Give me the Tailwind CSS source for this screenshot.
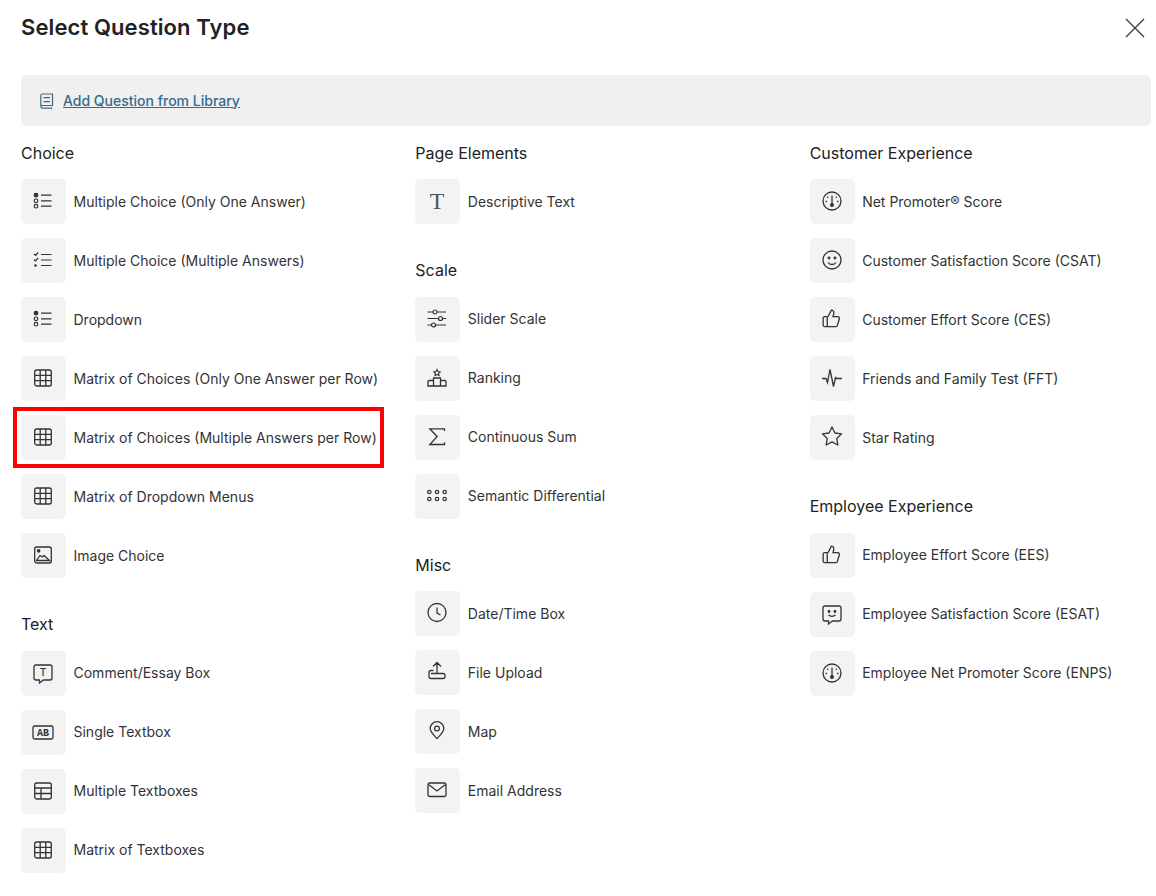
<!DOCTYPE html>
<html lang="en">
<head>
  <meta charset="UTF-8" />
  <title>Select Question Type</title>
  <script src="https://cdn.jsdelivr.net/npm/@tailwindcss/browser@4"></script>
</head>
<body class="bg-white font-['Inter',sans-serif] text-[#333]">

  <!-- Icon sprite -->
  <svg class="hidden">
    <defs>
      <symbol id="i-radio" viewBox="0 0 24 24"><circle cx="5" cy="6.2" r="1.8" fill="#333"/><circle cx="5" cy="11.8" r="1.8"/><circle cx="5" cy="17.2" r="1.8"/><path d="M10 6.2h10.5M10 11.8h10.5M10 17.2h10.5"/></symbol>
      <symbol id="i-check" viewBox="0 0 24 24"><path d="M3 6l1.5 1.5L7.2 4.5M3 11.5L4.500 13l2.700-3M10 6.500h10.500M10 12h10.500M10 17.500h10.500"/><circle cx="4.500" cy="17.500" r=".7" fill="#333"/></symbol>
      <symbol id="i-grid" viewBox="0 0 24 24"><rect x="3.7" y="4" width="16.6" height="16" rx="2"/><path d="M9.2 4v16M14.8 4v16M3.7 9.3h16.6M3.7 14.7h16.6"/></symbol>
      <symbol id="i-rows" viewBox="0 0 24 24"><rect x="3.7" y="4" width="16.6" height="16" rx="2"/><path d="M10 9v11M3.7 9h16.6M3.7 14.5h16.6"/></symbol>
      <symbol id="i-image" viewBox="0 0 24 24"><rect x="3.7" y="4" width="16.6" height="16" rx="2"/><circle cx="7.6" cy="7.8" r="1.2" fill="#333"/><path d="M5.500 17.500l3.500-5 2.500 1.500 1.500-1.500 5.500 5z"/></symbol>
      <symbol id="i-thumb" viewBox="0 0 24 24"><g transform="translate(1.5 1.5) scale(.82)"><path d="M7 10v12M15 5.88 14 10h5.83a2 2 0 0 1 1.92 2.56l-2.33 8A2 2 0 0 1 17.5 22H4a2 2 0 0 1-2-2v-8a2 2 0 0 1 2-2h2.76a2 2 0 0 0 1.79-1.11L12 2a3.13 3.13 0 0 1 3 3.88Z"/></g></symbol>
      <symbol id="i-gauge" viewBox="0 0 24 24"><circle cx="12" cy="12" r="9"/><circle cx="12" cy="16" r="1.3" fill="#333"/><path d="M12 15V6.500M7.300 7.800l.9.9M16.700 7.800l-.9.9M5.600 12.500h1.400M17 12.500h1.400"/></symbol>
    </defs>
  </svg>

  <div class="w-[1156px] h-[896px] overflow-hidden pl-[21px] pr-[5px]">

    <!-- Header -->
    <div class="h-[54px] flex items-center justify-between mb-[21px]">
      <h1 class="text-[22px] font-semibold tracking-[0.1px] text-[#222]">Select Question Type</h1>
      <svg class="mr-[5px] mt-[1px]" width="22" height="22" viewBox="0 0 22 22" fill="none" stroke="#444" stroke-width="1.4"><path d="M2 2l18 18M20 2L2 20"/></svg>
    </div>

    <!-- Library banner -->
    <div class="h-[51px] bg-[#f0f0f0] rounded-[5px] flex items-center pl-[18px] mb-[15px]">
      <svg width="16" height="16" viewBox="0 0 16 16" fill="none" stroke="#3a6b8c" stroke-width="1.2" class="mr-[8px]"><path d="M1.800 13V2.500a1.500 1.500 0 0 1 1.500-1.500H13.500v11.500H3.300a1.300 1.300 0 0 0 0 2.600h10.200M4.500 4.700h6.500M4.500 8.700h6.500"/></svg>
      <a href="#" class="text-sm font-medium text-[#336b8e] underline">Add Question from Library</a>
    </div>

    <!-- Columns -->
    <div class="grid grid-cols-[394.33px_394.33px_1fr]">

      <!-- Column 1 -->
      <div>
        <section class="pb-5">
          <h2 class="h-6 leading-6 mb-[14px] text-[#222]">Choice</h2>
          <div class="flex flex-col gap-[14px]">
            <div class="flex items-center gap-[7.5px] text-sm"><span class="w-[45px] h-[45px] rounded-[5px] bg-[#f3f3f3] flex items-center justify-center pr-px pb-px"><svg width="24" height="24" fill="none" stroke="#333" stroke-width="1.2"><use href="#i-radio"/></svg></span>Multiple Choice (Only One Answer)</div>
            <div class="flex items-center gap-[7.5px] text-sm"><span class="w-[45px] h-[45px] rounded-[5px] bg-[#f3f3f3] flex items-center justify-center pr-px pb-px"><svg width="24" height="24" fill="none" stroke="#333" stroke-width="1.2"><use href="#i-check"/></svg></span>Multiple Choice (Multiple Answers)</div>
            <div class="flex items-center gap-[7.5px] text-sm"><span class="w-[45px] h-[45px] rounded-[5px] bg-[#f3f3f3] flex items-center justify-center pr-px pb-px"><svg width="24" height="24" fill="none" stroke="#333" stroke-width="1.2"><use href="#i-radio"/></svg></span>Dropdown</div>
            <div class="flex items-center gap-[7.5px] text-sm"><span class="w-[45px] h-[45px] rounded-[5px] bg-[#f3f3f3] flex items-center justify-center pr-px pb-px"><svg width="24" height="24" fill="none" stroke="#333" stroke-width="1.3"><use href="#i-grid"/></svg></span>Matrix of Choices (Only One Answer per Row)</div>
            <div class="relative flex items-center gap-[7.5px] text-sm"><span class="w-[45px] h-[45px] rounded-[5px] bg-[#f3f3f3] flex items-center justify-center pr-px pb-px"><svg width="24" height="24" fill="none" stroke="#333" stroke-width="1.3"><use href="#i-grid"/></svg></span>Matrix of Choices (Multiple Answers per Row)
              <div class="absolute left-[-8px] top-[-8px] w-[371px] h-[61px] border-[4.5px] border-[#fe0000]"></div>
            </div>
            <div class="flex items-center gap-[7.5px] text-sm"><span class="w-[45px] h-[45px] rounded-[5px] bg-[#f3f3f3] flex items-center justify-center pr-px pb-px"><svg width="24" height="24" fill="none" stroke="#333" stroke-width="1.3"><use href="#i-grid"/></svg></span>Matrix of Dropdown Menus</div>
            <div class="flex items-center gap-[7.5px] text-sm"><span class="w-[45px] h-[45px] rounded-[5px] bg-[#f3f3f3] flex items-center justify-center pr-px pb-px"><svg width="24" height="24" fill="none" stroke="#333" stroke-width="1.3"><use href="#i-image"/></svg></span>Image Choice</div>
          </div>
        </section>
        <section class="mt-[14px]">
          <h2 class="h-6 leading-6 mb-[14.6px] text-[#222]">Text</h2>
          <div class="flex flex-col gap-[14px]">
            <div class="flex items-center gap-[7.5px] text-sm"><span class="w-[45px] h-[45px] rounded-[5px] bg-[#f3f3f3] flex items-center justify-center pr-px pb-px"><svg width="24" height="24" viewBox="0 0 24 24" fill="none" stroke="#333" stroke-width="1.3"><path d="M5 4h14a2 2 0 0 1 2 2v11a2 2 0 0 1-2 2h-6.500l-4 3v-3H5a2 2 0 0 1-2-2V6a2 2 0 0 1 2-2z"/><text x="12" y="15" text-anchor="middle" font-size="10" font-family="Inter" font-weight="500" fill="#333" stroke="none">T</text></svg></span>Comment/Essay Box</div>
            <div class="flex items-center gap-[7.5px] text-sm"><span class="w-[45px] h-[45px] rounded-[5px] bg-[#f3f3f3] flex items-center justify-center pr-px pb-px"><svg width="24" height="24" viewBox="0 0 24 24" fill="none" stroke="#333" stroke-width="1.3"><rect x="2" y="6" width="20" height="13" rx="1.5"/><text x="12" y="16" text-anchor="middle" font-size="10" font-family="Liberation Mono" font-weight="700" fill="#333" stroke="none">AB</text></svg></span>Single Textbox</div>
            <div class="flex items-center gap-[7.5px] text-sm"><span class="w-[45px] h-[45px] rounded-[5px] bg-[#f3f3f3] flex items-center justify-center pr-px pb-px"><svg width="24" height="24" fill="none" stroke="#333" stroke-width="1.3"><use href="#i-rows"/></svg></span>Multiple Textboxes</div>
            <div class="flex items-center gap-[7.5px] text-sm"><span class="w-[45px] h-[45px] rounded-[5px] bg-[#f3f3f3] flex items-center justify-center pr-px pb-px"><svg width="24" height="24" fill="none" stroke="#333" stroke-width="1.3"><use href="#i-grid"/></svg></span>Matrix of Textboxes</div>
          </div>
        </section>
      </div>

      <!-- Column 2 -->
      <div>
        <section class="pb-5">
          <h2 class="h-6 leading-6 mb-[14px] text-[#222]">Page Elements</h2>
          <div class="flex items-center gap-[7.5px] text-sm"><span class="w-[45px] h-[45px] rounded-[5px] bg-[#f3f3f3] flex items-center justify-center pr-px pb-px"><svg width="24" height="24" viewBox="0 0 24 24"><text x="12" y="20" text-anchor="middle" font-size="24" font-family="Liberation Serif" fill="#555">T</text></svg></span>Descriptive Text</div>
        </section>
        <section class="mt-[14px] pb-5">
          <h2 class="h-6 leading-6 mb-[14.6px] text-[#222]">Scale</h2>
          <div class="flex flex-col gap-[14px]">
            <div class="flex items-center gap-[7.5px] text-sm"><span class="w-[45px] h-[45px] rounded-[5px] bg-[#f3f3f3] flex items-center justify-center pr-px pb-px"><svg width="24" height="24" viewBox="0 0 24 24" fill="none" stroke="#333" stroke-width="1.2"><path d="M2.500 5h5.500M12 5h9M2.500 11.500h11M17.500 11.500H21M2.500 18h4M10.500 18H21"/><circle cx="10" cy="5" r="2"/><circle cx="15.500" cy="11.500" r="2"/><circle cx="8.500" cy="18" r="2"/></svg></span>Slider Scale</div>
            <div class="flex items-center gap-[7.5px] text-sm"><span class="w-[45px] h-[45px] rounded-[5px] bg-[#f3f3f3] flex items-center justify-center pr-px pb-px"><svg width="24" height="24" viewBox="0 0 24 24" fill="none" stroke="#333" stroke-width="1.3"><path d="M8.500 12h7v8h-7zM8.500 14.500H4a1 1 0 0 0-1 1V20h5.500M15.500 14.500H20a1 1 0 0 1 1 1V20h-5.500"/><path d="M12 3.500l1 2 2.200.3-1.600 1.500.4 2.200-2-1-2 1 .4-2.200-1.600-1.500 2.200-.3z" stroke-width="1.100"/></svg></span>Ranking</div>
            <div class="flex items-center gap-[7.5px] text-sm"><span class="w-[45px] h-[45px] rounded-[5px] bg-[#f3f3f3] flex items-center justify-center pr-px pb-px"><svg width="24" height="24" viewBox="0 0 24 24" fill="none" stroke="#333" stroke-width="1.300"><path d="M19.500 6V3.800H4.800L12.200 11.500L4.800 19.500H19.500V17.300"/></svg></span>Continuous Sum</div>
            <div class="flex items-center gap-[7.5px] text-sm"><span class="w-[45px] h-[45px] rounded-[5px] bg-[#f3f3f3] flex items-center justify-center pr-px pb-px"><svg width="24" height="24" viewBox="0 0 24 24" fill="none" stroke="#333" stroke-width="1.200"><circle cx="4.300" cy="8" r="1.700"/><circle cx="12" cy="8" r="1.700"/><circle cx="19.700" cy="8" r="1.700"/><circle cx="4.300" cy="15" r="1.700"/><circle cx="12" cy="15" r="1.700"/><circle cx="19.700" cy="15" r="1.700"/></svg></span>Semantic Differential</div>
          </div>
        </section>
        <section class="mt-[14px]">
          <h2 class="h-6 leading-6 mb-[14.6px] text-[#222]">Misc</h2>
          <div class="flex flex-col gap-[14px]">
            <div class="flex items-center gap-[7.5px] text-sm"><span class="w-[45px] h-[45px] rounded-[5px] bg-[#f3f3f3] flex items-center justify-center pr-px pb-px"><svg width="24" height="24" viewBox="0 0 24 24" fill="none" stroke="#333" stroke-width="1.300"><circle cx="12" cy="11.500" r="9"/><path d="M12 6.500v5.500l3.500 2"/></svg></span>Date/Time Box</div>
            <div class="flex items-center gap-[7.5px] text-sm"><span class="w-[45px] h-[45px] rounded-[5px] bg-[#f3f3f3] flex items-center justify-center pr-px pb-px"><svg width="24" height="24" viewBox="0 0 24 24" fill="none" stroke="#333" stroke-width="1.300"><path d="M12 14V2.500M8 6.500l4-4 4 4M8.500 10.500H6a2 2 0 0 0-2 2v4a2 2 0 0 0 2 2h12a2 2 0 0 0 2-2v-1a2 2 0 0 0-2-2H6"/></svg></span>File Upload</div>
            <div class="flex items-center gap-[7.5px] text-sm"><span class="w-[45px] h-[45px] rounded-[5px] bg-[#f3f3f3] flex items-center justify-center pr-px pb-px"><svg width="24" height="24" viewBox="0 0 24 24" fill="none" stroke="#333" stroke-width="1.300"><path d="M12 19.500c-3-3-6.800-6.500-6.800-10a6.800 6.800 0 0 1 13.600 0c0 3.500-3.800 7-6.800 10z"/><circle cx="12" cy="9.500" r="2.400"/></svg></span>Map</div>
            <div class="flex items-center gap-[7.5px] text-sm"><span class="w-[45px] h-[45px] rounded-[5px] bg-[#f3f3f3] flex items-center justify-center pr-px pb-px"><svg width="24" height="24" viewBox="0 0 24 24" fill="none" stroke="#333" stroke-width="1.300"><rect x="3" y="5" width="18" height="13.500" rx="1.800"/><path d="M3.500 6.500l8.500 6.500 8.500-6.500"/></svg></span>Email Address</div>
          </div>
        </section>
      </div>

      <!-- Column 3 -->
      <div>
        <section class="pb-5">
          <h2 class="h-6 leading-6 mb-[14px] text-[#222]">Customer Experience</h2>
          <div class="flex flex-col gap-[14px]">
            <div class="flex items-center gap-[7.5px] text-sm"><span class="w-[45px] h-[45px] rounded-[5px] bg-[#f3f3f3] flex items-center justify-center pr-px pb-px"><svg width="24" height="24" fill="none" stroke="#333" stroke-width="1.300"><use href="#i-gauge"/></svg></span>Net Promoter® Score</div>
            <div class="flex items-center gap-[7.5px] text-sm"><span class="w-[45px] h-[45px] rounded-[5px] bg-[#f3f3f3] flex items-center justify-center pr-px pb-px"><svg width="24" height="24" viewBox="0 0 24 24" fill="none" stroke="#333" stroke-width="1.300"><circle cx="12" cy="12" r="9"/><circle cx="9" cy="10" r=".8" fill="#333"/><circle cx="15" cy="10" r=".8" fill="#333"/><path d="M8 14.500c1 1.500 2.500 2 4 2s3-.5 4-2"/></svg></span>Customer Satisfaction Score (CSAT)</div>
            <div class="flex items-center gap-[7.5px] text-sm"><span class="w-[45px] h-[45px] rounded-[5px] bg-[#f3f3f3] flex items-center justify-center pr-px pb-px"><svg width="24" height="24" fill="none" stroke="#333" stroke-width="1.600"><use href="#i-thumb"/></svg></span>Customer Effort Score (CES)</div>
            <div class="flex items-center gap-[7.5px] text-sm"><span class="w-[45px] h-[45px] rounded-[5px] bg-[#f3f3f3] flex items-center justify-center pr-px pb-px"><svg width="24" height="24" viewBox="0 0 24 24" fill="none" stroke="#333" stroke-width="1.300"><path d="M2 12.500h4l1.500 4 2.500-13 3.500 17 2-9 1 1h5.500"/></svg></span>Friends and Family Test (FFT)</div>
            <div class="flex items-center gap-[7.5px] text-sm"><span class="w-[45px] h-[45px] rounded-[5px] bg-[#f3f3f3] flex items-center justify-center pr-px pb-px"><svg width="24" height="24" viewBox="0 0 24 24" fill="none" stroke="#333" stroke-width="1.300" stroke-linejoin="round"><path d="M12 2l2.900 6 6.600.9-4.800 4.600 1.200 6.500L12 16.900 6.100 20l1.200-6.500L2.500 8.900 9.100 8z"/></svg></span>Star Rating</div>
          </div>
        </section>
        <section class="mt-[14px]">
          <h2 class="h-6 leading-6 mb-[14.6px] text-[#222]">Employee Experience</h2>
          <div class="flex flex-col gap-[14px]">
            <div class="flex items-center gap-[7.5px] text-sm"><span class="w-[45px] h-[45px] rounded-[5px] bg-[#f3f3f3] flex items-center justify-center pr-px pb-px"><svg width="24" height="24" fill="none" stroke="#333" stroke-width="1.600"><use href="#i-thumb"/></svg></span>Employee Effort Score (EES)</div>
            <div class="flex items-center gap-[7.5px] text-sm"><span class="w-[45px] h-[45px] rounded-[5px] bg-[#f3f3f3] flex items-center justify-center pr-px pb-px"><svg width="24" height="24" viewBox="0 0 24 24" fill="none" stroke="#333" stroke-width="1.300"><path d="M5 4h14a2 2 0 0 1 2 2v11a2 2 0 0 1-2 2h-6.500l-4 3v-3H5a2 2 0 0 1-2-2V6a2 2 0 0 1 2-2z"/><circle cx="9" cy="9.500" r=".8" fill="#333"/><circle cx="15" cy="9.500" r=".8" fill="#333"/><path d="M8.500 13c1 1 2.200 1.300 3.500 1.300s2.500-.3 3.500-1.300"/></svg></span>Employee Satisfaction Score (ESAT)</div>
            <div class="flex items-center gap-[7.5px] text-sm"><span class="w-[45px] h-[45px] rounded-[5px] bg-[#f3f3f3] flex items-center justify-center pr-px pb-px"><svg width="24" height="24" fill="none" stroke="#333" stroke-width="1.300"><use href="#i-gauge"/></svg></span>Employee Net Promoter Score (ENPS)</div>
          </div>
        </section>
      </div>
    </div>
  </div>
</body>
</html>
